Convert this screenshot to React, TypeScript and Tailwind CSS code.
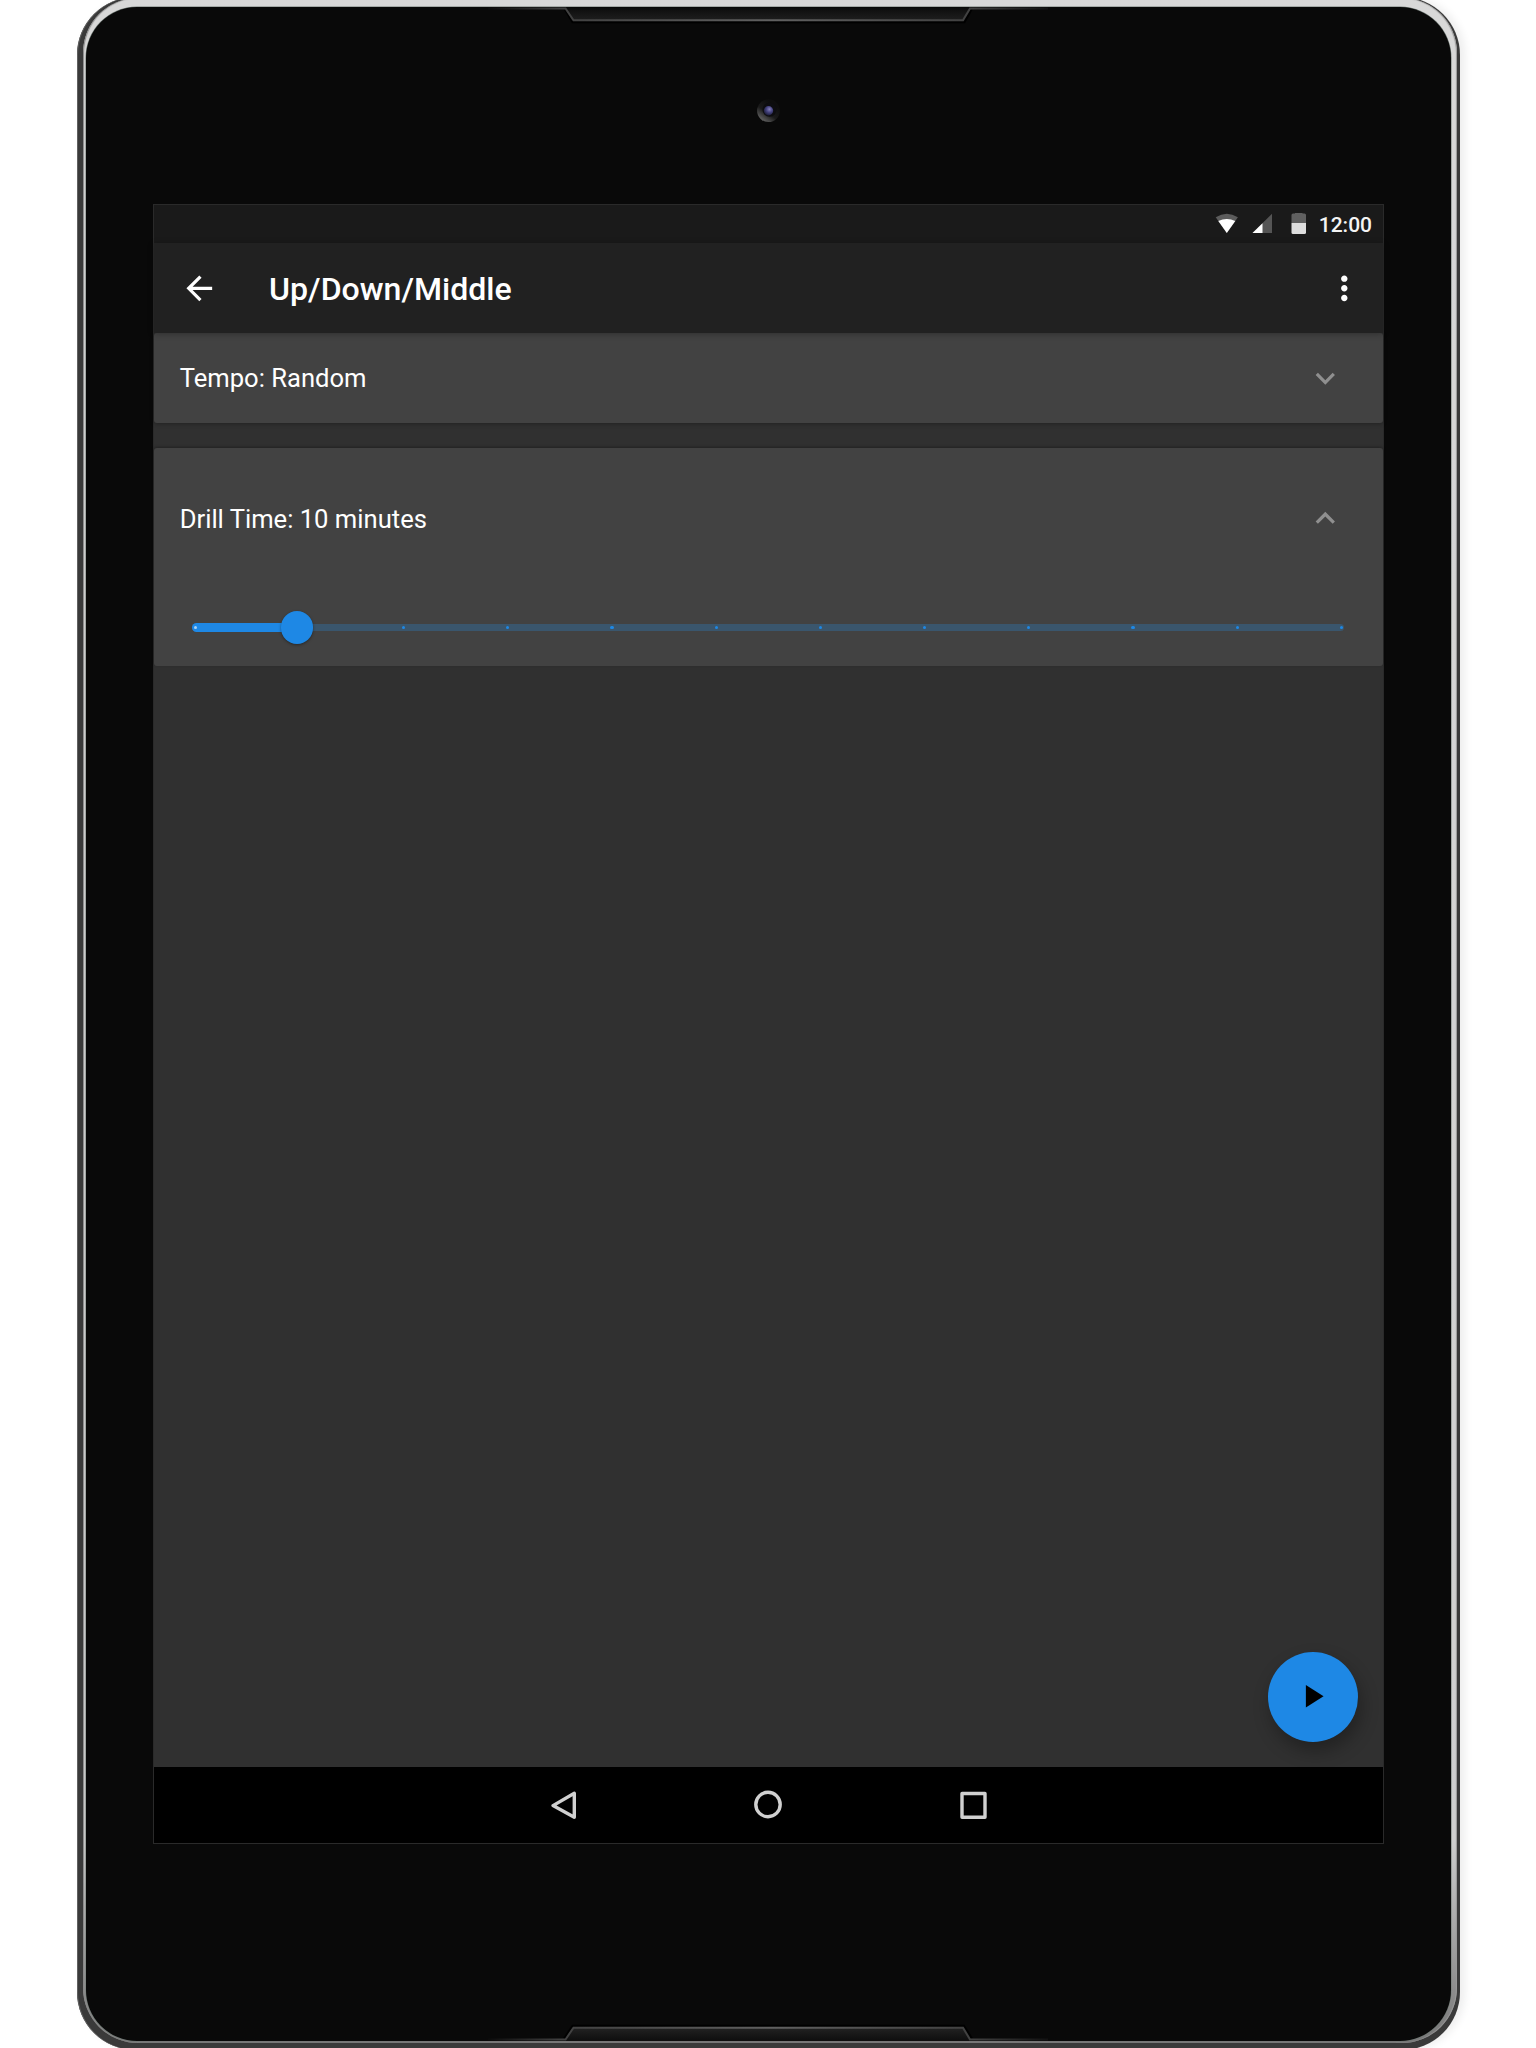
import React from "react";

const TICKS = 12;

function Bezel() {
  return (
    <svg className="pointer-events-none absolute left-0 top-0" width="1536" height="2048" viewBox="0 0 1536 2048" fill="none">
      <defs>
        <linearGradient id="edge" x1="486" x2="1060" y1="0" y2="0" gradientUnits="userSpaceOnUse">
          <stop offset="0" stopColor="#0a0a0a" />
          <stop offset="0.13" stopColor="#404040" />
          <stop offset="0.5" stopColor="#606060" />
          <stop offset="0.85" stopColor="#404040" />
          <stop offset="1" stopColor="#0a0a0a" />
        </linearGradient>
        <linearGradient id="grilleTop" x1="0" x2="0" y1="8" y2="20" gradientUnits="userSpaceOnUse">
          <stop offset="0" stopColor="#0d0d0d" />
          <stop offset="1" stopColor="#1e1e1e" />
        </linearGradient>
        <linearGradient id="grilleBottom" x1="0" x2="0" y1="2028" y2="2040" gradientUnits="userSpaceOnUse">
          <stop offset="0" stopColor="#222222" />
          <stop offset="1" stopColor="#0f0f0f" />
        </linearGradient>
        <linearGradient id="lensRing" x1="761" x2="773" y1="121" y2="104" gradientUnits="userSpaceOnUse">
          <stop offset="0" stopColor="#6a6a6a" />
          <stop offset="0.5" stopColor="#1a1a1a" />
          <stop offset="1" stopColor="#0d0d0d" />
        </linearGradient>
        <radialGradient id="lens" cx="0.6" cy="0.35" r="0.65">
          <stop offset="0" stopColor="#8580b8" />
          <stop offset="0.5" stopColor="#454380" />
          <stop offset="1" stopColor="#1d1e3a" />
        </radialGradient>
      </defs>
      <path d="M565 9.500 572.500 22.300 H964.500 L971.500 9.500" stroke="#000" strokeWidth="2" />
      <path d="M566 8 573.500 20 H963 L970 8Z" fill="url(#grilleTop)" />
      <path d="M488 8.500 H565.500 L573.500 20.300 H963 L970 8.500 H1048" stroke="url(#edge)" strokeWidth="2" />
      <path d="M564 2038.500 572.500 2025.700 H964 L972 2038.500" stroke="#000" strokeWidth="2" />
      <path d="M566 2041 573.500 2028 H963 L970 2041Z" fill="url(#grilleBottom)" />
      <path d="M488 2039.500 H565.500 L573.500 2027.700 H963 L970 2039.500 H1048" stroke="url(#edge)" strokeWidth="2" />
      <path d="M140 2042 H1396" stroke="#777777" strokeWidth="2" />
      <circle cx="768.500" cy="110.700" r="11.400" fill="url(#lensRing)" />
      <circle cx="769.500" cy="109.700" r="7" fill="#0d0d10" />
      <circle cx="768.500" cy="110.700" r="4.700" fill="url(#lens)" />
    </svg>
  );
}

function MaterialIcon({ d, className = "" }: { d: string; className?: string }) {
  return (
    <svg className={`block size-[38.6px] shrink-0 ${className}`} viewBox="0 0 24 24" fill="currentColor">
      <path d={d} />
    </svg>
  );
}

function StatusBar() {
  return (
    <div className="flex h-[38px] items-center justify-end bg-[#1a1a1a] pr-[11px] pt-[2px]">
      <svg className="block" width="92" height="24" viewBox="0 0 92 24">
        <path d="M0.700 4.300 Q11.800 -3 22.900 4.300 L11.800 20 Z" fill="#5c5c5c" />
        <path d="M3.300 8 Q11.800 4 20.300 8 L11.800 20 Z" fill="#ffffff" />
        <path d="M57 0.700 V20 H37.500 Z" fill="#555555" />
        <path d="M47.500 10.200 V20 H37.500 Z" fill="#ffffff" />
        <path d="M76.500 10 V2 Q76.500 0.500 78 0.500 H80 V0 H87.500 V0.500 H89.500 Q91 0.500 91 2 V10 Z" fill="#606060" />
        <path d="M76.500 10 H91 V19.500 Q91 21 89.500 21 H78 Q76.500 21 76.500 19.500 Z" fill="#dedede" />
      </svg>
      <span className="ml-[12px] text-[21px] font-medium leading-[38px] text-[#f4f4f4]">12:00</span>
    </div>
  );
}

function AppBar() {
  return (
    <header className="relative z-10 flex h-[90px] items-center bg-[#212121] pl-[25.500px] pr-[19.400px] text-white shadow-[0_1px_6px_rgba(0,0,0,0.3)]">
      <MaterialIcon d="M20 11H7.83l5.59-5.59L12 4l-8 8 8 8 1.41-1.41L7.83 13H20v-2z" />
      <h1 className="ml-[51px] flex-1 pt-[2px] text-[32.100px] font-medium leading-none">Up/Down/Middle</h1>
      <MaterialIcon d="M12 8c1.100 0 2-.9 2-2s-.9-2-2-2-2 .9-2 2 .9 2 2 2zm0 2c-1.100 0-2 .9-2 2s.9 2 2 2 2-.9 2-2-.9-2-2-2zm0 6c-1.100 0-2 .9-2 2s.9 2 2 2 2-.9 2-2-.9-2-2-2z" />
    </header>
  );
}

function PanelHeader({ title, open }: { title: string; open: boolean }) {
  return (
    <div className="flex items-center justify-between pl-[25.700px] pr-[38px] text-[#ffffff]">
      <span className="text-[25.6px] leading-[38px]">{title}</span>
      <MaterialIcon
        className="text-[#8f8f8f]"
        d={open ? "M12 8l-6 6 1.410 1.410L12 10.830l4.590 4.580L18 14z" : "M16.590 8.590L12 13.170 7.410 8.590 6 10l6 6 6-6z"}
      />
    </div>
  );
}

function Slider() {
  return (
    <div className="relative ml-[38px] mt-[73px] flex h-[33px] w-[1152px] items-center">
      <div className="h-[6.4px] w-full rounded-full bg-[#3a566d]" />
      <div className="absolute left-0 h-[9.6px] w-[106px] rounded-full bg-[#1e88e5]" />
      <div className="absolute left-[1.700px] flex w-[1149.300px] justify-between">
        {Array.from({ length: TICKS }, (_, i) => (
          <span key={i} className={`size-[3.2px] rounded-full ${i === 0 ? "bg-[#a9d2f5]" : "bg-[#1e88e5]"}`} />
        ))}
      </div>
      <div className="absolute left-[89px] size-[32.400px] rounded-full bg-[#1e88e5] shadow-[0_1px_3px_rgba(0,0,0,0.4)]" />
    </div>
  );
}

function NavBar() {
  return (
    <nav className="flex h-[76px] items-center justify-center gap-[173px] bg-black pb-[1px]">
      <svg className="block" width="32" height="32" viewBox="0 0 32 32" fill="none" stroke="#d0d0d0" strokeWidth="3.400" strokeLinejoin="round">
        <path d="M26.300 4.300 V28.300 L5 16.600 Z" />
      </svg>
      <svg className="block" width="32" height="32" viewBox="0 0 32 32" fill="none" stroke="#d0d0d0" strokeWidth="3.400">
        <circle cx="15" cy="15.500" r="12.200" />
      </svg>
      <svg className="block" width="32" height="32" viewBox="0 0 32 32" fill="none" stroke="#d0d0d0" strokeWidth="3.400" strokeLinejoin="round">
        <rect x="4" y="4.500" width="23" height="23.800" />
      </svg>
    </nav>
  );
}

export default function App() {
  return (
    <div className="relative h-[2048px] w-[1536px] overflow-hidden bg-white font-[Roboto,sans-serif]">
      <div className="-mt-[3px] ml-[77px] h-[2053px] w-[1382.500px] rounded-[58px] bg-[#3a3a3a] pl-[6px] pr-[3px] pt-[1px] shadow-[inset_1px_0_0_#606060,5px_0_8px_rgba(0,0,0,0.07)]">
        <div className="h-[2045px] rounded-[55px] bg-gradient-to-b from-[#d8d8d8] via-[#cfcfcf] via-90% to-[#777777] pl-[3px] pr-[6px] pt-[9px] shadow-[inset_1px_0_1px_#888888,inset_-1px_0_1px_#999999]">
          <div className="h-[2034px] rounded-[51px] bg-[#090909] pl-[67px] pt-[197px] shadow-[0_0_0_0.500px_#707a75]">
            <main className="flex h-[1640px] w-[1231px] flex-col border border-[#2a2a2a] bg-[#303030]">
              <StatusBar />
              <AppBar />
              <section className="flex h-[89.700px] shrink-0 flex-col justify-center rounded-[3px] bg-[#424242] shadow-[0_1px_4px_rgba(0,0,0,0.3)]">
                <PanelHeader title="Tempo: Random" open={false} />
              </section>
              <section className="mt-[25.500px] h-[217.600px] shrink-0 rounded-[3px] bg-[#424242] pt-[51.300px] shadow-[0_-1px_3px_rgba(0,0,0,0.3)]">
                <PanelHeader title="Drill Time: 10 minutes" open />
                <Slider />
              </section>
              <div className="flex flex-1 items-end justify-end pb-[25.500px] pr-[25.500px]">
                <button className="flex size-[90px] items-center justify-center rounded-full bg-[#1e88e5] pr-[1px] text-black shadow-[3px_9px_18px_rgba(0,0,0,0.3)]" aria-label="Start">
                  <MaterialIcon d="M8 5v14l11-7z" />
                </button>
              </div>
              <NavBar />
            </main>
          </div>
        </div>
      </div>
      <Bezel />
    </div>
  );
}
